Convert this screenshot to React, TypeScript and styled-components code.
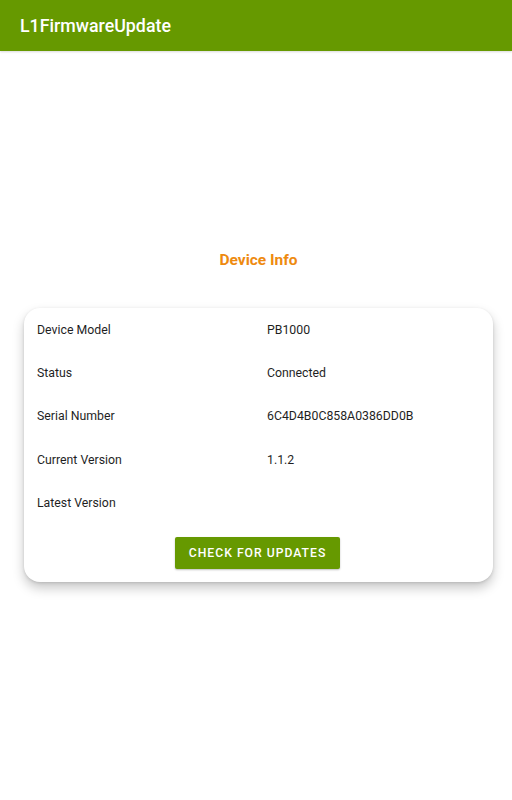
import React from 'react';
import styled, { createGlobalStyle } from 'styled-components';

const rows = [
  { label: 'Device Model', value: 'PB1000' },
  { label: 'Status', value: 'Connected' },
  { label: 'Serial Number', value: '6C4D4B0C858A0386DD0B' },
  { label: 'Current Version', value: '1.1.2' },
  { label: 'Latest Version', value: '' },
];

const App = () => {
  return (
    <>
      <GlobalStyle />
      <Screen>
        <AppBar>
          <AppTitle>L1FirmwareUpdate</AppTitle>
        </AppBar>
        <Content>
          <SectionTitle>Device Info</SectionTitle>
          <Card>
            {rows.map((row) => (
              <InfoRow key={row.label}>
                <Label>{row.label}</Label>
                <Value>{row.value}</Value>
              </InfoRow>
            ))}
            <ButtonRow>
              <Button type='button'>Check for updates</Button>
            </ButtonRow>
          </Card>
        </Content>
      </Screen>
    </>
  );
};

const GlobalStyle = createGlobalStyle`
  html, body {
    margin: 0;
    padding: 0;
    background: #ffffff;
  }
  body {
    font-family: Roboto, 'Noto Sans', sans-serif;
    color: #1f1f1f;
  }
`;

const Screen = styled.div`
  width: 512px;
  min-height: 800px;
  background: #ffffff;
`;

const AppBar = styled.header`
  height: 51px;
  background: #669900;
  display: flex;
  align-items: center;
  padding: 0 20px;
  box-shadow: 0 1px 2px rgba(0, 0, 0, 0.15);
`;

const AppTitle = styled.h1`
  margin: 0;
  font-size: 17.8px;
  font-weight: 500;
  color: #ffffff;
`;

const Content = styled.main`
  display: flex;
  flex-direction: column;
  align-items: center;
  padding: 199px 19px 0 24px;
`;

const SectionTitle = styled.h2`
  margin: 0 0 38px;
  font-size: 15.5px;
  font-weight: 700;
  color: #ee8a0f;
  line-height: 20px;
`;

const Card = styled.section`
  box-sizing: border-box;
  width: 469px;
  background: #ffffff;
  border-radius: 16px;
  box-shadow: 0 6px 12px rgba(0, 0, 0, 0.22), 0 1px 3px rgba(0, 0, 0, 0.12);
  padding: 0 13px 13px;
`;

const InfoRow = styled.div`
  display: grid;
  grid-template-columns: 230px 1fr;
  align-items: center;
  height: 43.4px;
  font-size: 12.3px;
`;

const Label = styled.span`
  color: #1f1f1f;
`;

const Value = styled.span`
  color: #1f1f1f;
`;

const ButtonRow = styled.div`
  display: flex;
  justify-content: center;
  margin-top: 12px;
  padding-right: 2px;
`;

const Button = styled.button`
  height: 32px;
  padding: 0 14px;
  border: 0;
  border-radius: 2px;
  background: #669900;
  color: #ffffff;
  font-family: Roboto, 'Noto Sans', sans-serif;
  font-size: 12.2px;
  font-weight: 500;
  letter-spacing: 1px;
  text-transform: uppercase;
  box-shadow: 0 1px 2px rgba(0, 0, 0, 0.25);
`;

export default App;
